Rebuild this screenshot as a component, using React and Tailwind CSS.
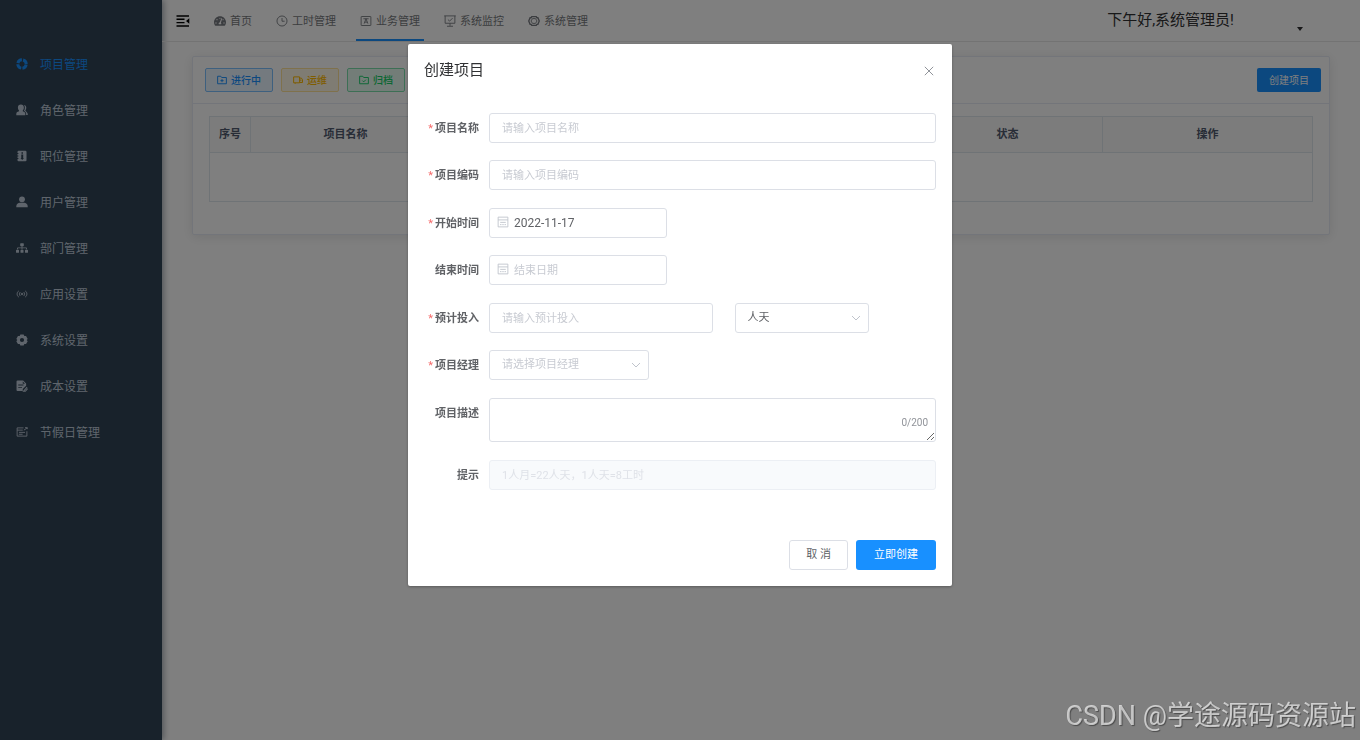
import React from "react";
import { FaSitemap, FaTachometerAlt } from "react-icons/fa";

function Svg({ children, className = "size-3" }) {
  return (
    <svg viewBox="0 0 16 16" className={"shrink-0 " + className} fill="none" stroke="currentColor" strokeWidth="1.2" aria-hidden="true">
      {children}
    </svg>
  );
}

const HelpIcon = () => (
  <Svg>
    <circle cx="8" cy="8" r="5.6" strokeWidth="4" strokeDasharray="7.2 1.6" strokeDashoffset="-0.8" />
  </Svg>
);
const RoleIcon = () => (
  <Svg>
    <g fill="currentColor" stroke="none">
      <path d="M6.500.8c2.400 0 4 1.700 4 4.200 0 1.500-.6 2.900-1.500 3.800v.8l2.200 1.200c.8.500 1.200 1.200 1.200 2.200v1.900H.4V13c0-1 .4-1.700 1.200-2.200L4 9.600v-.8A5.500 5.500 0 0 1 2.500 5c0-2.500 1.600-4.200 4-4.200z" />
      <path d="M10.800 1.200c1.800.3 2.900 1.800 2.900 3.900 0 1.400-.5 2.600-1.300 3.500l2 2.400c.9.900 1.300 1.800 1.300 3v.5h-2.200v-1.700c0-1.300-.5-2.300-1.500-2.900l-1.400-.8c.8-1 1.200-2.500 1.200-4.100 0-1.600-.3-2.900-1-3.800z" />
    </g>
  </Svg>
);
const PostIcon = () => (
  <Svg>
    <path fill="currentColor" stroke="none" fillRule="evenodd" d="M3.500 1h9A1.500 1.500 0 0 1 14 2.500v11a1.500 1.500 0 0 1-1.500 1.500h-9A1.500 1.500 0 0 1 2 13.500V12h1.200v-1.200H2V8.600h1.200V7.400H2V5.200h1.200V4H2V2.500A1.500 1.500 0 0 1 3.500 1zM7.300 3v2h2V3zM7 6v4.500H6l2.300 2.700 2.300-2.700H9.600V6z" />
  </Svg>
);
const UserIcon = () => (
  <Svg>
    <g fill="currentColor" stroke="none">
      <circle cx="8" cy="4.400" r="3.900" />
      <path d="M.4 15v-1.800C.4 10.800 2.800 9 5.200 9h5.600c2.400 0 4.800 1.800 4.800 4.200V15z" />
    </g>
  </Svg>
);
const AppIcon = () => (
  <Svg>
    <path d="M3.600 4C.8 5.500.8 10.500 3.600 12M12.400 4c2.800 1.500 2.800 6.500 0 8M5.500 5.500c-1 1.500-1 3.500 0 5M10.500 5.500c1 1.500 1 3.500 0 5M7 6.500l2 3M9 6.500l-2 3" />
  </Svg>
);
const ToolsIcon = () => (
  <Svg>
    <path fill="currentColor" stroke="none" fillRule="evenodd" d="M5.800.8h4.400l.9 2 2.300-.2 2.200 3.900L14.200 8l1.400 1.500-2.200 3.900-2.300-.2-.9 2H5.800l-.9-2-2.300.2L.4 9.500 1.800 8 .4 6.500l2.200-3.900 2.300.2zM8 5.200a2.800 2.800 0 1 0 0 5.600 2.800 2.800 0 0 0 0-5.600z" />
  </Svg>
);
const CostIcon = () => (
  <Svg>
    <path fill="currentColor" stroke="none" fillRule="evenodd" d="M2 .7h7.500L13.500 4.500v3L9 12v2.500H2A1.300 1.300 0 0 1 .7 13.200V2A1.300 1.300 0 0 1 2 .7zM3 6v1.300h7V6zm0 3.500v1.300h5V9.500zM9 2v3h3z" />
    <path d="M14.800 9.500L11 13.800l-1 1.200h2.500l3-3.500" strokeWidth="1.400" />
  </Svg>
);
const HolidayIcon = () => (
  <Svg>
    <path d="M10 2.500H1.500v11h13V7M1.500 5.500H9M4 8.500h8M3.800 11h5M10.500 5.500l4.500-3M12 2.200h3v2" />
  </Svg>
);
const ClockIcon = () => (
  <Svg>
    <circle cx="8" cy="8" r="6.700" />
    <path d="M8 4v4.300h3.500" />
  </Svg>
);
const BizIcon = () => (
  <Svg>
    <rect x="1.500" y="2" width="13" height="12" rx=".5" />
    <path d="M5.500 11.500L8 5l2.500 6.500M6.300 9.500h3.400M4.500 5h7" />
  </Svg>
);
const MonitorIcon = () => (
  <Svg>
    <path d="M.3 1.200h15.400M1.500 1.200v9.800h13V1.200M5.200 6l2.200 2.200 4-4M8 11v3.500M4 15h8" />
  </Svg>
);
const SettingIcon = () => (
  <Svg>
    <path d="M5 2.200h6L11.800 3.600h1.400L15 8l-1.800 4.400h-1.400L11 13.800H5l-.8-1.400H2.800L1 8l1.800-4.400h1.400z" strokeWidth="1.800" />
    <path d="M6 4.800h4L12 8l-2 3.200H6L4 8z" strokeWidth="1.200" />
  </Svg>
);
const FolderAddIcon = () => (
  <Svg className="size-2.5">
    <path d="M1 2h5l1.500 2H15v10H1zM8 6.500v5M5.500 9h5" strokeWidth="1.500" />
  </Svg>
);
const TruckIcon = () => (
  <Svg className="size-2.5">
    <path d="M1 3h9.500v9.500H1zM10.500 5h3l1.700 2.500v4.500h-4.700M3.500 12.500v1.500M12.500 7v3" strokeWidth="1.600" />
  </Svg>
);
const FolderCheckIcon = () => (
  <Svg className="size-2.5">
    <path d="M1 2h5l1.500 2H15v10H1zM5.500 9l2 2 3.500-3.500" strokeWidth="1.500" />
  </Svg>
);
const FoldIcon = () => (
  <svg viewBox="0 0 14 12" className="h-3 w-3.5" fill="currentColor" aria-hidden="true">
    <path d="M.5.200h12.500v1.500H.5zM.5 3.600h8v1.400h-8zM.5 6.900h8v1.400h-8zM.5 10.300h12.500v1.500H.5zM13.300 3.300v5.400L10 6z" />
  </svg>
);
const CalendarIcon = () => (
  <Svg>
    <path d="M1.500 1.500h13v13h-13zM1.500 5.200h13M4.300 8.500h7.400M4 11.500h2M7 11.500h2M10 11.500h2" />
  </Svg>
);

const MENU = [
  ["项目管理", HelpIcon],
  ["角色管理", RoleIcon],
  ["职位管理", PostIcon],
  ["用户管理", UserIcon],
  ["部门管理", () => <FaSitemap className="size-3 shrink-0" />],
  ["应用设置", AppIcon],
  ["系统设置", ToolsIcon],
  ["成本设置", CostIcon],
  ["节假日管理", HolidayIcon],
];

const TABS = [
  ["首页", () => <FaTachometerAlt className="size-3 shrink-0" />],
  ["工时管理", ClockIcon],
  ["业务管理", BizIcon],
  ["系统监控", MonitorIcon],
  ["系统管理", SettingIcon],
];

const FIELD =
  "h-[30px] rounded-[3px] border border-[#dcdfe6] bg-white px-3 text-xs text-[#606266] placeholder:text-[11px] placeholder:text-[#c8cbd2] outline-none";

function Row({ id, label, required, children }) {
  return (
    <div className="flex items-start">
      <label htmlFor={id} className="w-[65px] shrink-0 pr-2.5 text-right text-[11px] leading-8 font-bold whitespace-nowrap text-[#606266]">
        {required && <span className="mr-0.5 font-normal text-[#f56c6c]">*</span>}
        {label}
      </label>
      <div className="-mb-0.5 flex min-w-0 flex-1">{children}</div>
    </div>
  );
}

function DateField({ id, ...props }) {
  return (
    <div className="relative w-[178px]">
      <span className="pointer-events-none absolute top-2 left-2 text-[#c0c4cc]">
        <CalendarIcon />
      </span>
      <input id={id} type="text" className={FIELD + " w-full pl-6"} {...props} />
    </div>
  );
}

function SelectField({ id, className, tone, children, ...props }) {
  return (
    <div className={"relative " + className}>
      <select
        id={id}
        className={"h-[30px] w-full appearance-none rounded-[3px] border border-[#dcdfe6] bg-white px-3 text-[11px] outline-none " + tone}
        {...props}
      >
        {children}
      </select>
      <svg viewBox="0 0 10 10" className="pointer-events-none absolute top-2.5 right-2 size-2.5 text-[#c0c4cc]" fill="none" stroke="currentColor" aria-hidden="true">
        <path d="M1 3l4 4 4-4" />
      </svg>
    </div>
  );
}

function Sidebar() {
  return (
    <aside className="w-[162px] shrink-0 bg-[#304456] pt-[42px] shadow-[2px_0_6px_rgba(0,21,41,0.35)]">
      <nav className="flex flex-col">
        {MENU.map(([label, Icon], i) => (
          <a
            key={label}
            href="#"
            className={"flex h-[46px] items-center gap-3 pl-4 text-xs " + (i === 0 ? "text-[#1890ff]" : "text-[#bfcbd9]")}
          >
            <span className="pb-0.5">
              <Icon />
            </span>
            {label}
          </a>
        ))}
      </nav>
    </aside>
  );
}

function Header() {
  return (
    <header className="flex h-[42px] items-stretch border-b border-[#e6e6e6] pr-14 pl-3.5">
      <button type="button" aria-label="折叠菜单" className="mr-5 self-center text-black">
        <FoldIcon />
      </button>
      <nav className="flex gap-4">
        {TABS.map(([label, Icon], i) => (
          <a
            key={label}
            href="#"
            className={
              "flex items-center gap-1 border-y-2 border-t-transparent px-1 text-[11px] text-[#777a80] " +
              (i === 2 ? "border-b-[#1890ff]" : "border-b-transparent")
            }
          >
            <Icon />
            <span className="pt-0.5 leading-4">{label}</span>
          </a>
        ))}
      </nav>
      <button type="button" className="ml-auto flex items-center text-[15px] text-[#303133]">
        下午好,系统管理员!
        <svg viewBox="0 0 8 6" className="mt-4 ml-[62px] h-1.5 w-2" fill="currentColor" aria-hidden="true">
          <path d="M1 1h6L4 5z" />
        </svg>
      </button>
    </header>
  );
}

const TAG = "flex h-6 items-center gap-1 rounded-[2px] border px-[11px] text-[10px] font-medium";
const TH = "border border-[#dfe6ec] pt-0.5 font-bold";

function ProjectCard() {
  return (
    <section className="mx-[30px] mt-3.5 rounded-[2px] border border-[#e6ebf5] bg-white shadow-[0_2px_12px_rgba(0,0,0,0.1)]">
      <div className="flex h-[47px] items-center gap-2 border-b border-[#e6ebf5] pr-2 pl-3">
        <button type="button" className={TAG + " border-[#7cc0ff] bg-[#e8f4ff] text-[#1890ff]"}>
          <FolderAddIcon />
          进行中
        </button>
        <button type="button" className={TAG + " border-[#ffe399] bg-[#fff8e6] text-[#ffba00]"}>
          <TruckIcon />
          运维
        </button>
        <button type="button" className={TAG + " border-[#7bdfaa] bg-[#e7faf0] text-[#13ce66]"}>
          <FolderCheckIcon />
          归档
        </button>
        <button type="button" className="ml-auto h-6 rounded-[2px] bg-[#1890ff] px-3 text-[10px] text-white">
          创建项目
        </button>
      </div>
      <div className="pt-3 pr-4 pb-8 pl-4">
        <table className="w-full table-fixed border-collapse border border-[#dfe6ec] text-[11px] text-[#515a6e]">
          <colgroup>
            <col className="w-[41px]" />
            <col className="w-[190px]" />
            <col />
            <col className="w-[190px]" />
            <col className="w-[210px]" />
          </colgroup>
          <thead>
            <tr className="h-9 bg-[#f8f8f9]">
              <th className={TH}>序号</th>
              <th className={TH}>项目名称</th>
              <th className={TH} />
              <th className={TH}>状态</th>
              <th className={TH}>操作</th>
            </tr>
          </thead>
          <tbody>
            <tr className="h-[49px]">
              <td colSpan={5} />
            </tr>
          </tbody>
        </table>
      </div>
    </section>
  );
}

function CreateDialog() {
  return (
    <div role="dialog" aria-modal="true" aria-labelledby="dialog-title" className="w-2/5 rounded-[2px] bg-white px-4 pb-4 shadow-[0_1px_3px_rgba(0,0,0,0.3)]">
      <div className="flex h-[53px] items-center justify-between">
        <h2 id="dialog-title" className="text-[15px] text-[#303133]">创建项目</h2>
        <button type="button" aria-label="关闭" className="mr-0.5 text-[#909399]">
          <svg viewBox="0 0 10 10" className="size-2.5" fill="none" stroke="currentColor" aria-hidden="true">
            <path d="M.8.8l8.400 8.400M9.200.8L.8 9.200" />
          </svg>
        </button>
      </div>
      <form className="flex flex-col gap-4 pt-4" onSubmit={(e) => e.preventDefault()}>
        <div className="flex flex-col gap-[15px]">
          <Row id="name" label="项目名称" required>
            <input id="name" type="text" placeholder="请输入项目名称" className={FIELD + " w-full"} />
          </Row>
          <Row id="code" label="项目编码" required>
            <input id="code" type="text" placeholder="请输入项目编码" className={FIELD + " w-full"} />
          </Row>
        </div>
        <div className="flex flex-col gap-[15px]">
          <Row id="start" label="开始时间" required>
            <DateField id="start" defaultValue="2022-11-17" />
          </Row>
          <Row id="end" label="结束时间">
            <DateField id="end" placeholder="结束日期" />
          </Row>
        </div>
        <div className="flex flex-col gap-[15px]">
          <Row id="effort" label="预计投入" required>
            <input id="effort" type="text" placeholder="请输入预计投入" className={FIELD + " mr-[22px] w-1/2"} />
            <SelectField id="unit" aria-label="单位" className="w-[30%]" tone="text-[#606266]">
              <option>人天</option>
            </SelectField>
          </Row>
          <Row id="manager" label="项目经理" required>
            <SelectField id="manager" className="w-[160px]" tone="text-[#c8cbd2]" defaultValue="">
              <option value="">请选择项目经理</option>
            </SelectField>
          </Row>
        </div>
        <Row id="desc" label="项目描述">
          <div className="relative mb-1 flex w-full">
            <textarea
              id="desc"
              maxLength={200}
              className="h-11 w-full resize-y rounded-[3px] border border-[#dcdfe6] px-3 py-1 text-xs text-[#606266] outline-none"
            />
            <span className="pointer-events-none absolute right-2 bottom-3 text-[10px] leading-[14px] text-[#909399]">0/200</span>
          </div>
        </Row>
        <Row id="tip" label="提示">
          <input
            id="tip"
            type="text"
            disabled
            placeholder="1人月=22人天，1人天=8工时"
            className="h-[30px] w-full rounded-[3px] border border-[#eceff4] bg-[#f8fafc] px-3 text-[11px] placeholder:text-[#dfe2e8]"
          />
        </Row>
      </form>
      <div className="mt-12 flex justify-end gap-2">
        <button type="button" className="h-[30px] rounded-[3px] border border-[#dcdfe6] bg-white px-4 text-[11px] text-[#606266]">
          取 消
        </button>
        <button type="button" className="h-[30px] rounded-[3px] bg-[#1890ff] px-[18px] text-[11px] text-white">
          立即创建
        </button>
      </div>
    </div>
  );
}

export default function App() {
  return (
    <div className="flex min-h-screen bg-white font-['Roboto','Noto_Sans_CJK_SC',sans-serif]">
      <Sidebar />
      <main className="min-w-0 flex-1">
        <Header />
        <ProjectCard />
      </main>
      <div className="fixed inset-0 flex items-start justify-center bg-black/50 pt-11">
        <CreateDialog />
      </div>
      <div className="pointer-events-none fixed right-1 bottom-1 text-[27px] leading-10 whitespace-nowrap text-white/65 [text-shadow:1px_1px_1px_rgba(0,0,0,0.4)]">
        CSDN @学途源码资源站
      </div>
    </div>
  );
}
